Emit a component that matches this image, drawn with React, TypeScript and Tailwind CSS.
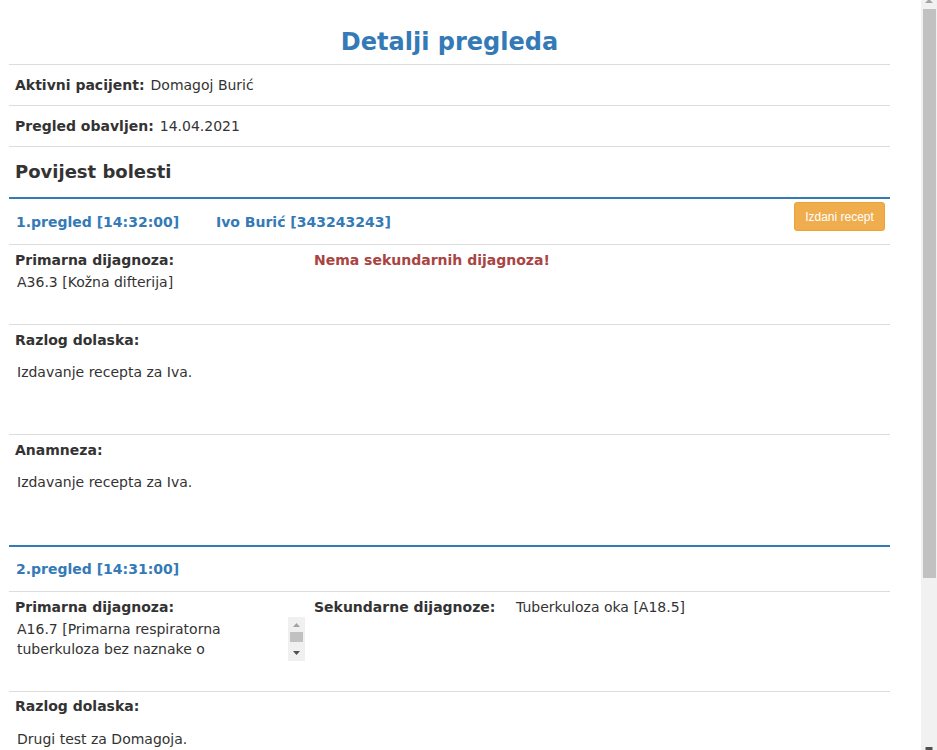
import React from "react";

const font = { fontFamily: '"DejaVu Sans", Verdana, sans-serif' };

function MiniScrollbar() {
  return (
    <div className="flex h-[44px] w-[17px] shrink-0 flex-col items-center bg-[#f0f0f0]">
      <svg width="17" height="15" viewBox="0 0 17 15" className="shrink-0">
        <path d="M5 10 L8.5 6 L12 10 Z" fill="#a3a3a3" />
      </svg>
      <div className="h-[10px] w-[13px] bg-[#c1c1c1]" />
      <div className="flex-1" />
      <svg width="17" height="15" viewBox="0 0 17 15" className="shrink-0">
        <path d="M5 5 L12 5 L8.5 9 Z" fill="#505050" />
      </svg>
    </div>
  );
}

function PageScrollbar() {
  return (
    <div className="flex h-[750px] w-[16px] shrink-0 flex-col items-center bg-[#f1f1f1]">
      <svg width="16" height="9" viewBox="0 0 16 9" className="shrink-0">
        <path d="M4 3 L8 -1 L12 3 Z" fill="#a3a3a3" />
      </svg>
      <div className="h-[569px] w-[13px] bg-[#c1c1c1]" />
      <div className="flex-1" />
      <svg width="16" height="4" viewBox="0 0 16 4" className="shrink-0">
        <path d="M4.5 1 L11.5 1 L11.5 4 L4.5 4 Z" fill="#505050" />
      </svg>
    </div>
  );
}

export default function App() {
  return (
    <div className="flex h-[750px] w-[937px] overflow-hidden bg-white text-[14px] text-[#333]" style={font}>
      <div className="h-[750px] w-[921px] overflow-hidden">
        <div className="ml-[9px] w-[881px]">
          <div className="flex h-[64px] items-center justify-center pt-[19px]">
            <h1 className="text-[24px] font-bold leading-[30px] text-[#337ab7]">Detalji pregleda</h1>
          </div>

          <div className="flex h-[41px] items-center border-t border-[#ddd] px-[6px] pt-[1px]">
            <span className="font-bold">Aktivni pacijent:</span>
            <span className="ml-[6px]">Domagoj Burić</span>
          </div>
          <div className="flex h-[41px] items-center border-t border-[#ddd] px-[6px] pt-[1px]">
            <span className="font-bold">Pregled obavljen:</span>
            <span className="ml-[6px]">14.04.2021</span>
          </div>
          <div className="flex h-[51px] items-center border-t border-[#ddd] px-[6px]">
            <h2 className="text-[18px] font-bold leading-[24px]">Povijest bolesti</h2>
          </div>

          {/* 1. pregled */}
          <div className="flex h-[47px] items-center border-t-2 border-[#337ab7] pl-[7px] pr-[5px] pt-[2px]">
            <span className="w-[200px] font-bold text-[#337ab7]">1.pregled [14:32:00]</span>
            <span className="font-bold text-[#337ab7]">Ivo Burić [343243243]</span>
            <div className="flex-1" />
            <button
              className="mb-[12px] h-[29px] w-[91px] rounded-[3px] border border-[#eea236] bg-[#f0ad4e] text-[12px] text-white"
              style={{ fontFamily: '"Liberation Sans Narrow", "Arial Narrow", "Liberation Sans", sans-serif' }}
            >
              Izdani recept
            </button>
          </div>
          <div className="grid h-[80px] grid-cols-[299px_1fr] border-t border-[#ddd] px-[6px] pt-[5px] leading-[20px]">
            <div>
              <div className="font-bold">Primarna dijagnoza:</div>
              <div className="mt-[2px] pl-[2px]">A36.3 [Kožna difterija]</div>
            </div>
            <div className="font-bold text-[#a94442]">Nema sekundarnih dijagnoza!</div>
          </div>
          <div className="h-[110px] border-t border-[#ddd] px-[6px] pt-[5px] leading-[20px]">
            <div className="font-bold">Razlog dolaska:</div>
            <div className="mt-[12px] pl-[2px]">Izdavanje recepta za Iva.</div>
          </div>
          <div className="h-[111px] border-t border-[#ddd] px-[6px] pt-[5px] leading-[20px]">
            <div className="font-bold">Anamneza:</div>
            <div className="mt-[12px] pl-[2px]">Izdavanje recepta za Iva.</div>
          </div>

          {/* 2. pregled */}
          <div className="flex h-[46px] items-center border-t-2 border-[#337ab7] pl-[7px] pr-[5px] pt-[1px]">
            <span className="font-bold text-[#337ab7]">2.pregled [14:31:00]</span>
          </div>
          <div className="grid h-[100px] grid-cols-[299px_1fr] border-t border-[#ddd] px-[6px] pt-[5px] leading-[20px]">
            <div>
              <div className="font-bold">Primarna dijagnoza:</div>
              <div className="flex h-[44px] w-[290px] overflow-hidden">
                <div className="flex-1 overflow-hidden pl-[2px] pt-[2px]">
                  <div className="whitespace-nowrap">A16.7 [Primarna respiratorna</div>
                  <div className="whitespace-nowrap">tuberkuloza bez naznake o</div>
                </div>
                <MiniScrollbar />
              </div>
            </div>
            <div className="flex">
              <span className="w-[202px] font-bold">Sekundarne dijagnoze:</span>
              <span>Tuberkuloza oka [A18.5]</span>
            </div>
          </div>
          <div className="h-[110px] border-t border-[#ddd] px-[6px] pt-[4px] leading-[20px]">
            <div className="font-bold">Razlog dolaska:</div>
            <div className="mt-[13px] pl-[2px]">Drugi test za Domagoja.</div>
          </div>
        </div>
      </div>
      <PageScrollbar />
    </div>
  );
}
